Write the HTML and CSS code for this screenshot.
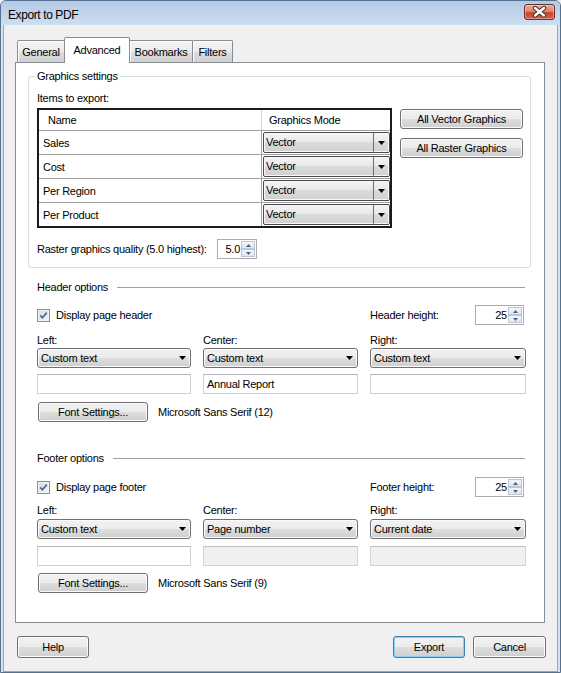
FILE: index.html
```html
<!DOCTYPE html>
<html>
<head>
<meta charset="utf-8">
<title>Export to PDF</title>
<link rel="stylesheet" href="styles.css">
</head>
<body>
<div class="window">
  <div class="titlebar">
    <span class="title">Export to PDF</span>
    <div class="close-btn">
      <svg width="29" height="14" viewBox="0 0 29 14">
        <path d="M10 3 L19 10.5 M19 3 L10 10.5" stroke="#43302c" stroke-width="4.4" stroke-linecap="round"/>
        <path d="M10 3 L19 10.5 M19 3 L10 10.5" stroke="#ffffff" stroke-width="2.4" stroke-linecap="round"/>
      </svg>
    </div>
  </div>
  <div class="client">
    <div class="tabs">
      <div class="tab t1">General</div>
      <div class="tab t2 active">Advanced</div>
      <div class="tab t3">Bookmarks</div>
      <div class="tab t4">Filters</div>
    </div>
    <div class="panel">
      <div class="group">
        <div class="group-title">Graphics settings</div>
        <div class="items-label">Items to export:</div>
        <div class="grid-area">
          <div class="dgv">
            <div class="dgv-row dgv-head"><div class="dgv-name">Name</div><div class="dgv-mode">Graphics Mode</div></div>
            <div class="dgv-row"><div class="dgv-name">Sales</div><div class="dgv-mode"><div class="gcombo"><span class="gc-text">Vector</span><span class="gc-btn"><svg width="7" height="4" viewBox="0 0 7 4"><polygon points="0,0 7,0 3.5,4" fill="#000"/></svg></span></div></div></div>
            <div class="dgv-row"><div class="dgv-name">Cost</div><div class="dgv-mode"><div class="gcombo"><span class="gc-text">Vector</span><span class="gc-btn"><svg width="7" height="4" viewBox="0 0 7 4"><polygon points="0,0 7,0 3.5,4" fill="#000"/></svg></span></div></div></div>
            <div class="dgv-row"><div class="dgv-name">Per Region</div><div class="dgv-mode"><div class="gcombo"><span class="gc-text">Vector</span><span class="gc-btn"><svg width="7" height="4" viewBox="0 0 7 4"><polygon points="0,0 7,0 3.5,4" fill="#000"/></svg></span></div></div></div>
            <div class="dgv-row last"><div class="dgv-name">Per Product</div><div class="dgv-mode"><div class="gcombo"><span class="gc-text">Vector</span><span class="gc-btn"><svg width="7" height="4" viewBox="0 0 7 4"><polygon points="0,0 7,0 3.5,4" fill="#000"/></svg></span></div></div></div>
          </div>
          <div class="side-btns">
            <button class="btn side-btn">All Vector Graphics</button>
            <button class="btn side-btn">All Raster Graphics</button>
          </div>
        </div>
        <div class="quality">
          <span class="quality-label">Raster graphics quality (5.0 highest):</span>
          <div class="spin spin-q">
            <span class="spin-val">5.0</span>
            <span class="spin-btns">
              <span class="spin-b"><svg width="5" height="3" viewBox="0 0 5 3"><polygon points="0,3 5,3 2.5,0" fill="#4d6185"/></svg></span>
              <span class="spin-b"><svg width="5" height="3" viewBox="0 0 5 3"><polygon points="0,0 5,0 2.5,3" fill="#4d6185"/></svg></span>
            </span>
          </div>
        </div>
      </div>

      <div class="opts opts-header">
        <div class="opt-title"><span>Header options</span><span class="opt-line"></span></div>
        <div class="grid3 row-check">
          <div class="check-wrap">
            <span class="cb"><svg width="11" height="11" viewBox="0 0 11 11"><path d="M2.2 5.4 L4.4 7.8 L8.8 2.6" fill="none" stroke="#4f64a0" stroke-width="1.7"/></svg></span>
            <span>Display page header</span>
          </div>
          <div class="hgroup">
            <span>Header height:</span>
            <div class="spin spin-h">
              <span class="spin-val">25</span>
              <span class="spin-btns">
                <span class="spin-b"><svg width="5" height="3" viewBox="0 0 5 3"><polygon points="0,3 5,3 2.5,0" fill="#4d6185"/></svg></span>
                <span class="spin-b"><svg width="5" height="3" viewBox="0 0 5 3"><polygon points="0,0 5,0 2.5,3" fill="#4d6185"/></svg></span>
              </span>
            </div>
          </div>
        </div>
        <div class="grid3 labels-row"><span>Left:</span><span>Center:</span><span>Right:</span></div>
        <div class="grid3 combo-row">
          <div class="combo"><span>Custom text</span><svg class="arrow" width="7" height="4" viewBox="0 0 7 4"><polygon points="0,0 7,0 3.5,4" fill="#000"/></svg></div>
          <div class="combo"><span>Custom text</span><svg class="arrow" width="7" height="4" viewBox="0 0 7 4"><polygon points="0,0 7,0 3.5,4" fill="#000"/></svg></div>
          <div class="combo"><span>Custom text</span><svg class="arrow" width="7" height="4" viewBox="0 0 7 4"><polygon points="0,0 7,0 3.5,4" fill="#000"/></svg></div>
        </div>
        <div class="grid3 text-row">
          <div class="textbox"></div>
          <div class="textbox">Annual Report</div>
          <div class="textbox"></div>
        </div>
        <div class="font-row">
          <button class="btn font-btn">Font Settings...</button>
          <span class="font-name">Microsoft Sans Serif (12)</span>
        </div>
      </div>

      <div class="opts opts-footer">
        <div class="opt-title"><span>Footer options</span><span class="opt-line"></span></div>
        <div class="grid3 row-check row-check-f">
          <div class="check-wrap">
            <span class="cb"><svg width="11" height="11" viewBox="0 0 11 11"><path d="M2.2 5.4 L4.4 7.8 L8.8 2.6" fill="none" stroke="#4f64a0" stroke-width="1.7"/></svg></span>
            <span>Display page footer</span>
          </div>
          <div class="hgroup">
            <span>Footer height:</span>
            <div class="spin spin-h">
              <span class="spin-val">25</span>
              <span class="spin-btns">
                <span class="spin-b"><svg width="5" height="3" viewBox="0 0 5 3"><polygon points="0,3 5,3 2.5,0" fill="#4d6185"/></svg></span>
                <span class="spin-b"><svg width="5" height="3" viewBox="0 0 5 3"><polygon points="0,0 5,0 2.5,3" fill="#4d6185"/></svg></span>
              </span>
            </div>
          </div>
        </div>
        <div class="grid3 labels-row labels-row-f"><span>Left:</span><span>Center:</span><span>Right:</span></div>
        <div class="grid3 combo-row combo-row-f">
          <div class="combo"><span>Custom text</span><svg class="arrow" width="7" height="4" viewBox="0 0 7 4"><polygon points="0,0 7,0 3.5,4" fill="#000"/></svg></div>
          <div class="combo"><span>Page number</span><svg class="arrow" width="7" height="4" viewBox="0 0 7 4"><polygon points="0,0 7,0 3.5,4" fill="#000"/></svg></div>
          <div class="combo"><span>Current date</span><svg class="arrow" width="7" height="4" viewBox="0 0 7 4"><polygon points="0,0 7,0 3.5,4" fill="#000"/></svg></div>
        </div>
        <div class="grid3 text-row text-row-f">
          <div class="textbox"></div>
          <div class="textbox disabled"></div>
          <div class="textbox disabled"></div>
        </div>
        <div class="font-row font-row-f">
          <button class="btn font-btn">Font Settings...</button>
          <span class="font-name">Microsoft Sans Serif (9)</span>
        </div>
      </div>
    </div>
    <div class="dialog-buttons">
      <button class="btn dlg-btn">Help</button>
      <button class="btn dlg-btn btn-export">Export</button>
      <button class="btn dlg-btn btn-cancel">Cancel</button>
    </div>
  </div>
</div>
</body>
</html>
```
FILE: styles.css
```css
* { box-sizing: border-box; }
html, body { margin: 0; padding: 0; }
body {
  width: 561px;
  height: 673px;
  overflow: hidden;
  background: #f0f0f0;
  font-family: "Liberation Sans", Arial, sans-serif;
  font-size: 11px;
  letter-spacing: -0.25px;
  color: #000;
}

.window {
  width: 561px;
  height: 673px;
  border: 1px solid #56708f;
  border-radius: 6px 6px 0 0;
  background: #d4e2f1;
  padding: 0 2px;
  display: flex;
  flex-direction: column;
}

.titlebar {
  flex: none;
  height: 24px;
  margin: 0 -2px;
  border-radius: 5px 5px 0 0;
  background: linear-gradient(#b3cae5, #c3d6ec 60%, #cddef1);
  display: flex;
  align-items: flex-start;
  padding-left: 7px;
}
.title {
  margin-top: 7px;
  line-height: 14px;
  font-size: 12px;
  letter-spacing: -0.4px;
}
.close-btn {
  margin-left: auto;
  margin-right: 5px;
  margin-top: 3px;
  width: 31px;
  height: 16px;
  border: 1px solid #6b2f25;
  border-radius: 3px;
  background: linear-gradient(#e9ab9d, #dc8572 45%, #c8452d 55%, #d4634c);
  box-shadow: inset 0 0 0 1px rgba(255, 255, 255, 0.35);
  display: flex;
  align-items: center;
  justify-content: center;
}

.client {
  flex: 1;
  background: #f0f0f0;
  border: 1px solid #86a9d3;
  border-top: none;
  padding-top: 12px;
}

.tabs {
  display: flex;
  align-items: flex-end;
  height: 25px;
  margin-left: 13px;
}
.tab {
  height: 22px;
  margin-right: -1px;
  border: 1px solid #898c95;
  border-bottom: none;
  border-radius: 2px 2px 0 0;
  background: linear-gradient(#f3f3f3, #ebebeb 50%, #dedede 50%, #d1d1d1);
  box-shadow: inset 1px 1px 0 #fff;
  display: flex;
  align-items: center;
  justify-content: center;
}
.tab.active {
  height: 26px;
  margin-bottom: -1px;
  background: #fff;
  box-shadow: none;
  padding-bottom: 2px;
  position: relative;
  z-index: 1;
}
.t1 { width: 48px; }
.t2 { width: 66px; }
.t3 { width: 64px; }
.t4 { width: 41px; }

.panel {
  margin-left: 11px;
  width: 530px;
  height: 561px;
  border: 1px solid #898c95;
  background: #fff;
  padding-left: 12px;
}

.group {
  margin-top: 13px;
  width: 503px;
  border: 1px solid #d5dfe5;
  border-radius: 3px;
  padding: 0 8px 8px;
}
.group-title {
  width: max-content;
  margin: -7px 0 0 -2px;
  padding: 0 2px;
  background: #fff;
  line-height: 13px;
}
.items-label {
  margin-top: 9px;
  line-height: 13px;
}
.grid-area {
  display: flex;
  align-items: flex-start;
  gap: 8px;
  margin-top: 3px;
}

.dgv {
  width: 356px;
  height: 120px;
  border: 2px solid #1b1b1b;
  background: #fff;
  display: flex;
  flex-direction: column;
}
.dgv-row {
  flex: none;
  display: flex;
  height: 24px;
  border-bottom: 1px solid #a0a0a0;
}
.dgv-row.dgv-head { height: 21px; }
.dgv-row.last { height: 23px; border-bottom: none; }
.dgv-name {
  width: 223px;
  border-right: 1px solid #a0a0a0;
  padding-left: 4px;
  display: flex;
  align-items: center;
}
.dgv-mode { flex: 1; }
.dgv-head .dgv-name { padding-left: 9px; border-right-color: #d8d8d8; }
.dgv-head .dgv-mode { padding-left: 7px; display: flex; align-items: center; }

.gcombo {
  margin: 1px 0 0 1px;
  width: 127px;
  height: 21px;
  border: 1px solid #4b4b4b;
  border-radius: 2px;
  background: linear-gradient(#f4f4f4, #e7e7e7 50%, #dadada 50%, #d0d0d0);
  box-shadow: inset 0 0 0 1px #f8f8f8;
  display: flex;
}
.gc-text {
  flex: 1;
  padding-left: 2px;
  line-height: 19px;
}
.gc-btn {
  width: 16px;
  border-left: 1px solid #6f6f6f;
  display: flex;
  align-items: center;
  justify-content: center;
}

.btn {
  font: inherit;
  letter-spacing: inherit;
  color: #000;
  padding: 0;
  margin: 0;
  border: 1px solid #707070;
  border-radius: 3px;
  background: linear-gradient(#f2f2f2, #ebebeb 50%, #dddddd 50%, #cfcfcf);
  box-shadow: inset 0 0 0 1px #fbfbfb;
  display: flex;
  align-items: center;
  justify-content: center;
}
.side-btns {
  display: flex;
  flex-direction: column;
  gap: 9px;
  margin-top: 1px;
}
.side-btn { width: 123px; height: 20px; }

.quality {
  display: flex;
  align-items: center;
  height: 20px;
  margin-top: 11px;
}
.quality-label { width: 180px; }

.spin {
  display: flex;
  height: 20px;
  border: 1px solid #abadb3;
  background: #fff;
}
.spin-q { width: 40px; }
.spin-h { width: 49px; margin-right: 2px; }
.spin-val {
  flex: 1;
  text-align: right;
  line-height: 18px;
  padding-right: 1px;
}
.spin-btns {
  width: 14px;
  margin: 1px 1px 1px 0;
  display: flex;
  flex-direction: column;
}
.spin-b {
  flex: 1;
  border: 1px solid #bcc6d4;
  background: linear-gradient(#f4f6fa, #dfe5ee);
  display: flex;
  align-items: center;
  justify-content: center;
}

.opts {
  margin-left: 9px;
  width: 489px;
}
.opts-header { margin-top: 13px; }
.opts-footer { margin-top: 30px; }
.opt-title {
  display: flex;
  align-items: center;
  height: 13px;
  line-height: 13px;
}
.opt-line {
  flex: 1;
  height: 1px;
  margin-left: 9px;
  margin-right: 1px;
  background: #a0a0a0;
}

.grid3 {
  display: grid;
  grid-template-columns: 154px 155px 156px;
  column-gap: 12px;
}
.row-check {
  height: 20px;
  margin-top: 11px;
  align-items: center;
}
.row-check-f { margin-top: 12px; }
.check-wrap {
  grid-column: 1 / 3;
  display: flex;
  align-items: center;
}
.cb {
  width: 13px;
  height: 13px;
  margin-right: 6px;
  border: 1px solid #8e8f8f;
  background: linear-gradient(135deg, #d6d9de, #f7f7f7);
  box-shadow: inset 0 0 0 1px #f2f2f2;
  display: flex;
  align-items: center;
  justify-content: center;
}
.hgroup {
  grid-column: 3;
  display: flex;
  align-items: center;
  justify-content: space-between;
}

.labels-row {
  margin-top: 9px;
  height: 13px;
  line-height: 13px;
}
.labels-row-f { margin-top: 7px; }
.combo-row { margin-top: 1px; }
.combo-row-f { margin-top: 2px; }
.combo {
  height: 20px;
  border: 1px solid #707070;
  border-radius: 3px;
  background: linear-gradient(#f2f2f2, #ebebeb 50%, #dddddd 50%, #cfcfcf);
  box-shadow: inset 0 0 0 1px #fbfbfb;
  display: flex;
  align-items: center;
  padding-left: 3px;
}
.combo .arrow {
  margin-left: auto;
  margin-right: 4px;
}
.text-row { margin-top: 6px; }
.text-row-f { margin-top: 7px; }
.textbox {
  height: 20px;
  border: 1px solid #cdd0d5;
  border-top-color: #b3b6bc;
  background: #fff;
  padding-left: 3px;
  display: flex;
  align-items: center;
}
.textbox.disabled {
  background: #f0f0f0;
  border-color: #d2d2d2;
  border-top-color: #c2c2c2;
}
.font-row {
  display: flex;
  align-items: center;
  margin-top: 8px;
  height: 20px;
}
.font-row-f { margin-top: 7px; }
.font-btn {
  width: 110px;
  height: 20px;
  margin-left: 1px;
}
.font-name { margin-left: 10px; }

.dialog-buttons {
  display: flex;
  margin: 13px 11px 0 13px;
}
.dlg-btn { width: 72px; height: 22px; }
.btn-export {
  margin-left: auto;
  border-color: #3c7fb1;
  box-shadow: inset 0 0 0 1px #8ad2f3;
}
.btn-cancel { width: 73px; margin-left: 8px; }
```
